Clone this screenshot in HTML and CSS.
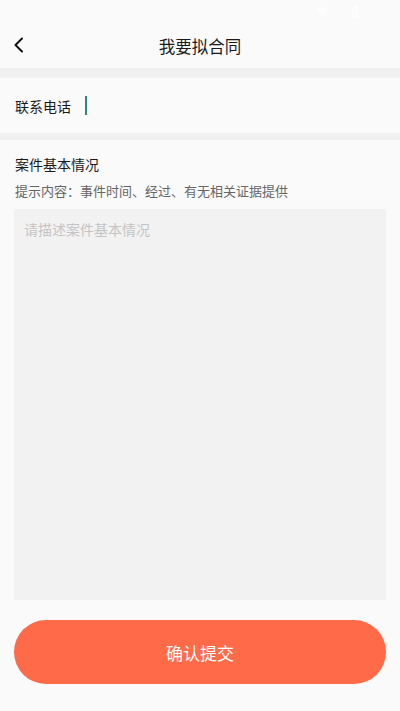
FILE: index.html
```html
<!DOCTYPE html>
<html lang="zh-CN">
<head>
<meta charset="utf-8">
<meta name="viewport" content="width=device-width, initial-scale=1">
<title>我要拟合同</title>
<link rel="stylesheet" href="styles.css">
</head>
<body>
<div class="page">
  <div class="statusbar">
    <span class="sb-left"></span>
    <span class="sb-right">
      <svg class="sb-icon" width="14" height="12" viewBox="0 0 14 12"><path d="M7 11 L0.5 3.5 Q7 -1.5 13.5 3.5 Z" fill="#ffffff"/></svg>
      <svg class="sb-icon" width="9" height="14" viewBox="0 0 9 14"><rect x="1" y="2" width="7" height="11" rx="1" fill="#ffffff"/><rect x="3" y="0.5" width="3" height="2" fill="#ffffff"/></svg>
    </span>
  </div>
  <header class="header">
    <svg class="back" width="20" height="20" viewBox="0 0 20 20"><path d="M13 3.5 L6.5 10 L13 16.5" fill="none" stroke="#111" stroke-width="2" stroke-linecap="round" stroke-linejoin="round"/></svg>
    <h1 class="title">我要拟合同</h1>
  </header>
  <div class="divider"></div>
  <div class="row">
    <span class="row-label">联系电话</span>
    <span class="cursor"></span>
  </div>
  <div class="divider small"></div>
  <section class="section">
    <div class="sec-title">案件基本情况</div>
    <div class="sec-hint">提示内容：事件时间、经过、有无相关证据提供</div>
    <div class="textarea">请描述案件基本情况</div>
  </section>
  <div class="btn-wrap">
    <button class="submit">确认提交</button>
  </div>
</div>
</body>
</html>
```
FILE: styles.css
```css
* { box-sizing: border-box; }
html, body { margin: 0; padding: 0; }
body {
  background: #fafafa;
  font-family: "Noto Sans CJK SC", "Noto Sans", sans-serif;
  color: #1a1a1a;
}
.page {
  width: 400px;
  height: 711px;
  display: flex;
  flex-direction: column;
  background: #fafafa;
}
.statusbar {
  height: 24px;
  display: flex;
  justify-content: space-between;
  align-items: center;
  padding: 0 40px 0 16px;
}
.sb-right { display: flex; gap: 22px; align-items: center; opacity: 0.6; }
.header {
  height: 44px;
  display: flex;
  align-items: center;
  justify-content: center;
  position: relative;
}
.back {
  position: absolute;
  left: 9px;
  top: 11px;
}
.title {
  margin: 0;
  font-size: 16.5px;
  font-weight: 400;
  color: #1a1a1a;
}
.divider {
  height: 10px;
  background: #f1f1f1;
}
.divider.small { height: 7px; }
.row {
  height: 55px;
  display: flex;
  align-items: center;
  padding-left: 15px;
}
.row-label {
  font-size: 14px;
  color: #1a1a1a;
}
.cursor {
  display: inline-block;
  width: 2px;
  height: 19px;
  background: #2a8a72;
  margin-left: 14px;
}
.section {
  display: flex;
  flex-direction: column;
  padding: 14px 14px 0 14px;
  flex: 1;
}
.sec-title {
  font-size: 14px;
  line-height: 20px;
  color: #1a1a1a;
  padding-left: 1px;
}
.sec-hint {
  font-size: 13px;
  line-height: 18px;
  color: #666;
  margin-top: 8px;
  padding-left: 1px;
}
.textarea {
  margin-top: 9px;
  height: 391px;
  background: #f2f2f2;
  color: #c4c4c4;
  font-size: 14px;
  line-height: 20px;
  padding: 10px 10px;
}
.btn-wrap {
  padding: 0 14px 27px 14px;
}
.submit {
  width: 100%;
  height: 64px;
  border: none;
  border-radius: 32px;
  background: #ff6b48;
  color: #ffffff;
  font-family: "Noto Sans CJK SC", "Noto Sans", sans-serif;
  font-size: 17px;
  display: flex;
  align-items: center;
  justify-content: center;
  padding: 0;
}
```
